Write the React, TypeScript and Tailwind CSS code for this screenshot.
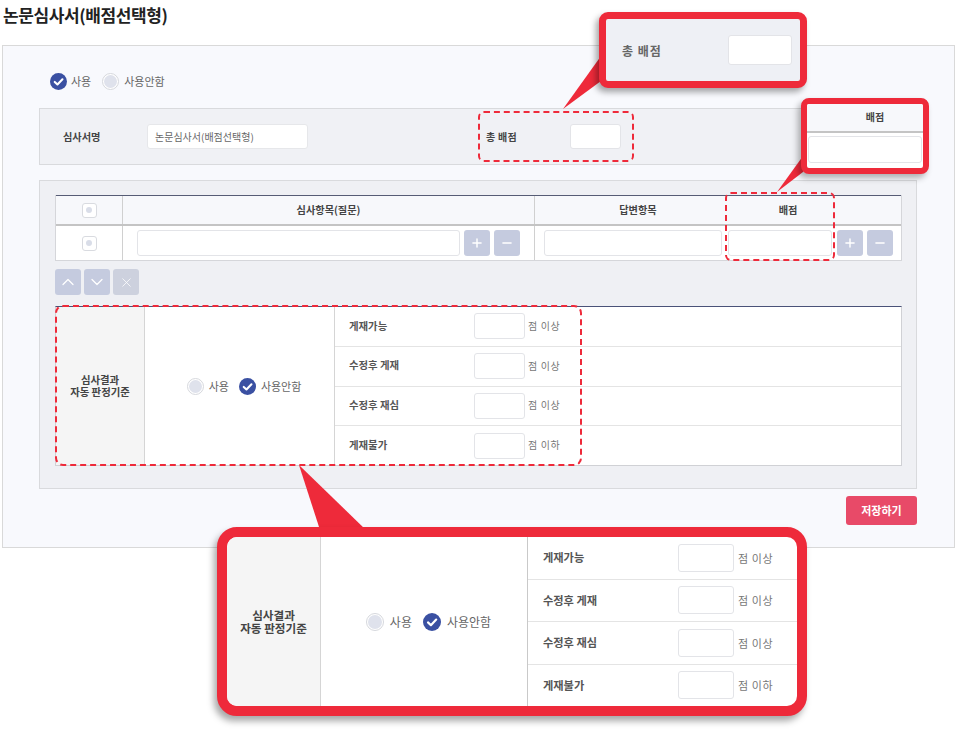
import { ChevronDown, ChevronUp, Minus, Plus, X } from 'lucide-react';

const criteria = [
  { label: '게재가능', suffix: '점 이상' },
  { label: '수정후 게재', suffix: '점 이상' },
  { label: '수정후 재심', suffix: '점 이상' },
  { label: '게재불가', suffix: '점 이하' },
];

const Checked = ({ big = false }: { big?: boolean }) => (
  <svg viewBox="0 0 18 18" className={big ? 'h-[18px] w-[18px] shrink-0' : 'h-[17px] w-[17px] shrink-0'}>
    <circle cx="9" cy="9" r="9" fill="#3a50a2" />
    <path d="M5 9.4l2.9 2.8L13.2 6.6" fill="none" stroke="#fff" strokeWidth="2.2" strokeLinecap="round" strokeLinejoin="round" />
  </svg>
);

const Unchecked = ({ big = false }: { big?: boolean }) => (
  <span
    className={`flex shrink-0 items-center justify-center rounded-full border border-[#d6d8dd] bg-white ${
      big ? 'h-[18px] w-[18px]' : 'h-[17px] w-[17px]'
    }`}
  >
    <span className={`rounded-full bg-[#dfe2ec] ${big ? 'h-[14px] w-[14px]' : 'h-[13px] w-[13px]'}`} />
  </span>
);

const Box = ({ className }: { className: string }) => (
  <div className={`rounded-[3px] border border-[#e3e4e8] bg-white ${className}`} />
);

const TinyCheck = () => (
  <span className="flex h-[15px] w-[15px] items-center justify-center rounded-[3px] border border-[#d9dbe0] bg-white">
    <span className="h-[6px] w-[6px] rounded-full bg-[#d9dde8]" />
  </span>
);

const IconBtn = ({ children, muted = false }: { children: React.ReactNode; muted?: boolean }) => (
  <button className={`flex h-[26px] w-[26px] shrink-0 items-center justify-center rounded-[3px] text-white ${muted ? 'bg-[#cdd1de]' : 'bg-[#c5cbdf]'}`}>
    {children}
  </button>
);

const Criteria = ({ big = false }: { big?: boolean }) => (
  <div className="flex flex-1 flex-col">
    {criteria.map((c, i) => (
      <div
        key={c.label}
        className={`flex flex-1 items-center ${i > 0 ? 'border-t border-[#e4e4e4]' : ''} ${big ? 'pl-[15px]' : 'pl-[14px]'}`}
      >
        <span className={`font-bold text-[#555] ${big ? 'w-[135px] text-[11.2px]' : 'w-[125px] pb-[2px] text-[10.4px]'}`}>{c.label}</span>
        <Box className={big ? 'h-[28px] w-[56px]' : 'h-[26px] w-[51px]'} />
        <span className={`tracking-[0.6px] text-[#777] ${big ? 'ml-[4px] text-[11px]' : 'ml-[3px] pb-[2px] text-[10px]'}`}>{c.suffix}</span>
      </div>
    ))}
  </div>
);

export default function App() {
  return (
    <div className="relative h-[730px] w-[957px] overflow-hidden bg-white font-['Noto_Sans_CJK_KR','Noto_Sans',sans-serif] text-[#333]">
      <h1 className="h-[45px] pl-[3px] pt-[2px] text-[17px] leading-[26px] font-bold tracking-[-0.4px] text-[#222]">논문심사서(배점선택형)</h1>

      <section className="ml-[2px] h-[503px] w-[953px] border border-[#d9d9d9] bg-[#f8f9fd] pl-[36px] pr-[37px]">
        <div className="flex h-[62px] items-start pl-[11px] pt-[27px] text-[11px] leading-[16px] text-[#666]">
          <Checked />
          <span className="ml-[4px]">사용</span>
          <span className="ml-[11px]"><Unchecked /></span>
          <span className="ml-[5px]">사용안함</span>
        </div>

        <div className="flex h-[57px] items-center border border-[#d9dadd] bg-[#f0f1f5]">
          <span className="w-[107px] pl-[23px] text-[10.2px] font-bold text-[#444]">심사서명</span>
          <div className="flex h-[25px] w-[161px] items-center rounded-[3px] border border-[#e6e7ea] bg-white pl-[7px] text-[10px] text-[#666]">
            논문심사서(배점선택형)
          </div>
          <span className="ml-[178px] w-[84px] text-[10px] font-bold tracking-[0.3px] text-[#444]">총 배점</span>
          <Box className="h-[25px] w-[51px]" />
        </div>

        <div className="mt-[15px] h-[309px] border border-[#d9dadd] bg-[#eff0f4] pl-[15px] pr-[14px] pt-[14px]">
          <div className="border border-t-0 border-[#d5d6da] bg-white">
            <div className="flex h-[31px] border-t border-b-2 border-t-[#565c75] border-b-[#c4c4c4] bg-[#f7f8fb] text-[10.2px] font-bold text-[#444]">
              <div className="flex w-[67px] items-center justify-center border-r border-[#d0d0d0]"><TinyCheck /></div>
              <div className="flex w-[412px] items-center justify-center border-r border-[#d0d0d0]">심사항목(질문)</div>
              <div className="flex flex-1 items-center pl-[9px]">
                <span className="w-[188px] text-center">답변항목</span>
                <span className="w-[112px] text-center">배점</span>
              </div>
            </div>
            <div className="flex h-[34px]">
              <div className="flex w-[67px] items-center justify-center border-r border-[#d0d0d0]"><TinyCheck /></div>
              <div className="flex w-[412px] items-center gap-[4px] border-r border-[#d0d0d0] pl-[14px]">
                <Box className="h-[26px] w-[323px]" />
                <IconBtn><Plus size={14} strokeWidth={2.5} /></IconBtn>
                <IconBtn><Minus size={14} strokeWidth={2.5} /></IconBtn>
              </div>
              <div className="flex flex-1 items-center pl-[9px]">
                <Box className="h-[26px] w-[178px]" />
                <Box className="ml-[6px] h-[26px] w-[104px]" />
                <div className="ml-[5px] flex gap-[4px]">
                  <IconBtn><Plus size={14} strokeWidth={2.5} /></IconBtn>
                  <IconBtn><Minus size={14} strokeWidth={2.5} /></IconBtn>
                </div>
              </div>
            </div>
          </div>

          <div className="mt-[8px] flex gap-[3px]">
            <IconBtn><ChevronUp size={20} strokeWidth={1.5} /></IconBtn>
            <IconBtn><ChevronDown size={20} strokeWidth={1.5} /></IconBtn>
            <IconBtn muted><X size={15} strokeWidth={1.2} /></IconBtn>
          </div>

          <div className="mt-[11px] flex h-[160px] border border-[#d0d1d5] border-t-[#4a5278] bg-white">
            <div className="flex w-[89px] items-center justify-center border-r border-[#d5d5d5] bg-[#f5f5f5] text-center text-[10.4px] leading-[12px] font-bold text-[#444]">
              심사결과<br />자동 판정기준
            </div>
            <div className="flex w-[190px] items-center justify-center gap-[5px] border-r border-[#d5d5d5] pl-[9px] text-[11px] text-[#666]">
              <Unchecked />
              <span>사용</span>
              <span className="ml-[5px]"><Checked /></span>
              <span>사용안함</span>
            </div>
            <Criteria />
          </div>
        </div>

        <div className="mt-[7px] flex justify-end">
          <button className="h-[29px] w-[71px] rounded-[3px] bg-[#e84a68] text-[11px] font-bold text-white">저장하기</button>
        </div>
      </section>

      {/* dashed highlights */}
      <div className="absolute left-[478px] top-[111px] h-[51px] w-[156px] rounded-[6px] border-2 border-dashed border-[#ee2a3a]" />
      <div className="absolute left-[725px] top-[192px] h-[69px] w-[110px] rounded-[6px] border-2 border-dashed border-[#ee2a3a]" />
      <div className="absolute left-[55px] top-[305px] h-[161px] w-[527px] rounded-[8px] border-2 border-dashed border-[#ee2a3a]" />

      {/* callout tails */}
      <svg className="absolute left-0 top-0 h-[730px] w-[957px]" viewBox="0 0 957 730" fill="#ee2a3a">
        <polygon points="601,56 601,81 563,109" />
        <polygon points="803,156 803,172 777,192" />
        <polygon points="299,465 320,530 366,530" />
      </svg>

      {/* callout: total score */}
      <div className="absolute left-[599px] top-[12px] flex h-[76px] w-[208px] items-center rounded-[9px] border-[7px] border-[#ee2a3a] bg-[#eef0f5] pl-[16px] shadow-[-3px_4px_6px_rgba(0,0,0,0.35)]">
        <span className="mt-[2px] w-[106px] text-[12px] font-bold tracking-[1px] text-[#666]">총 배점</span>
        <Box className="h-[30px] w-[64px]" />
      </div>

      {/* callout: score column */}
      <div className="absolute left-[801px] top-[98px] flex h-[76px] w-[128px] flex-col overflow-hidden rounded-[8px] border-[6px] border-[#ee2a3a] bg-white shadow-[-3px_4px_6px_rgba(0,0,0,0.3)]">
        <div className="flex h-[29px] shrink-0 items-center justify-center border-b-2 border-[#c4c4c4] bg-[#f7f8fb] pb-[2px] pl-[20px] text-[10px] font-bold text-[#444]">배점</div>
        <Box className="mx-[1px] mt-[3px] h-[27px] w-[114px]" />
      </div>

      {/* callout: decision rules */}
      <div className="absolute left-[217px] top-[527px] flex h-[189px] w-[590px] overflow-hidden rounded-[20px] border-[10px] border-[#ee2a3a] bg-white shadow-[-3px_5px_7px_rgba(0,0,0,0.35)]">
        <div className="flex w-[94px] items-center justify-center border-r border-[#d5d5d5] bg-[#f5f5f5] text-center text-[11.6px] leading-[13px] font-bold text-[#444]">
          심사결과<br />자동 판정기준
        </div>
        <div className="flex w-[207px] items-center justify-center gap-[6px] border-r border-[#c9c9c9] pl-[9px] text-[12px] text-[#666]">
          <Unchecked big />
          <span>사용</span>
          <span className="ml-[5px]"><Checked big /></span>
          <span>사용안함</span>
        </div>
        <Criteria big />
      </div>
    </div>
  );
}
